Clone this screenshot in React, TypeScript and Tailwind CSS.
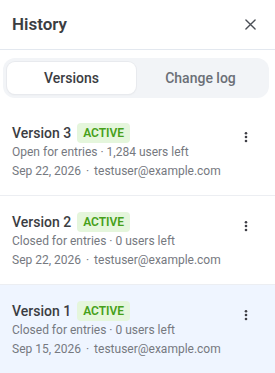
import React from "react";

const items = [
  { v: "Version 3", status: "Open for entries · 1,284 users left", date: "Sep 22, 2026", selected: false },
  { v: "Version 2", status: "Closed for entries · 0 users left", date: "Sep 22, 2026", selected: false },
  { v: "Version 1", status: "Closed for entries · 0 users left", date: "Sep 15, 2026", selected: true },
];

function Kebab() {
  return (
    <svg width="24" height="24" viewBox="0 0 24 24" fill="#3f3f46">
      <circle cx="12" cy="8.2" r="1.3" />
      <circle cx="12" cy="12" r="1.3" />
      <circle cx="12" cy="16" r="1.3" />
    </svg>
  );
}

export default function App() {
  return (
    <div
      className="w-[275px] h-[373px] bg-white overflow-hidden flex flex-col"
      style={{ fontFamily: "Roboto, 'Noto Sans', sans-serif" }}
    >
      <div className="h-[50px] shrink-0 flex items-center justify-between pl-3 pr-[19px] border-b border-[#e3e8ef]">
        <span className="text-[17px] font-semibold text-[#3b3d42] leading-none">History</span>
        <svg width="11" height="11" viewBox="0 0 12 12" stroke="#4b4f56" strokeWidth="1.5" strokeLinecap="round">
          <path d="M1 1 11 11M11 1 1 11" />
        </svg>
      </div>
      <div className="ml-[3px] mr-[6px] mt-2 mb-[9px] p-1 rounded-xl bg-[#f2f4f7] flex shrink-0">
        <div className="flex-1 h-8 rounded-lg bg-white shadow-[0_0_0_1px_#e8eaee,0_1px_2px_rgba(0,0,0,0.06)] flex items-center justify-center text-[14px] font-medium text-[#3b3d42]">
          Versions
        </div>
        <div className="flex-1 h-8 flex items-center justify-center text-[14px] font-medium text-[#6b6f76]">
          Change log
        </div>
      </div>
      <div className="flex flex-col flex-1">
        {items.map((it, i) => (
          <div
            key={i}
            className={`flex items-start justify-between pl-3 pr-[17px] pt-4 pb-[15px] ${
              i < items.length - 1 ? "border-b border-[#eceef2]" : "flex-1"
            } ${it.selected ? "bg-[#eff5ff]" : ""}`}
          >
            <div className="flex flex-col">
              <div className="flex items-center gap-1.5 h-5">
                <span className="text-[14px] font-medium text-[#3b3d42] leading-none">{it.v}</span>
                <span className="h-5 px-1.5 rounded bg-[#e5f6dc] text-[#46a01a] text-[12px] font-semibold flex items-center leading-none">
                  ACTIVE
                </span>
              </div>
              <div className="text-[12px] leading-[18.5px] text-[#76797f] whitespace-nowrap">{it.status}</div>
              <div className="text-[12px] leading-[18.5px] text-[#76797f] whitespace-nowrap">
                {it.date} <span className="mx-[2px]">·</span> testuser@example.com
              </div>
            </div>
            <div className="mt-0.5">
              <Kebab />
            </div>
          </div>
        ))}
      </div>
    </div>
  );
}
